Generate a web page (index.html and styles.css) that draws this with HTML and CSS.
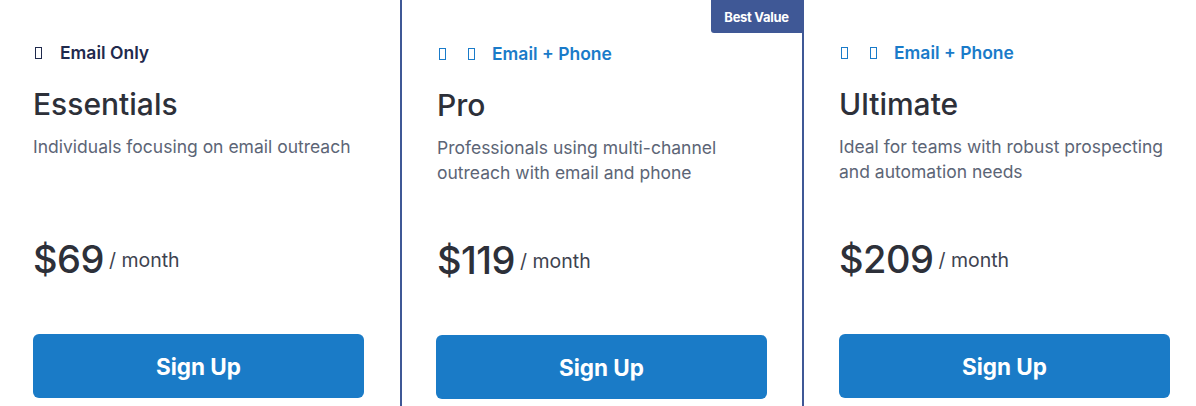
FILE: index.html
```html
<!DOCTYPE html>
<html lang="en">
<head>
<meta charset="utf-8">
<title>Pricing</title>
<link rel="stylesheet" href="styles.css">
</head>
<body>
<div class="plans">
  <div class="plan">
    <div class="channel channel-dark"><span class="ico"></span><span class="channel-text">Email Only</span></div>
    <h2 class="plan-name">Essentials</h2>
    <p class="plan-desc">Individuals focusing on email outreach</p>
    <div class="price"><span class="amount">$69</span><span class="per">/ month</span></div>
    <a class="btn" href="#">Sign Up</a>
  </div>
  <div class="plan plan-featured">
    <div class="badge">Best Value</div>
    <div class="channel"><span class="ico"></span><span class="ico"></span><span class="channel-text">Email + Phone</span></div>
    <h2 class="plan-name">Pro</h2>
    <p class="plan-desc">Professionals using multi-channel outreach with email and phone</p>
    <div class="price"><span class="amount">$119</span><span class="per">/ month</span></div>
    <a class="btn" href="#">Sign Up</a>
  </div>
  <div class="plan plan-last">
    <div class="channel"><span class="ico"></span><span class="ico"></span><span class="channel-text">Email + Phone</span></div>
    <h2 class="plan-name">Ultimate</h2>
    <p class="plan-desc">Ideal for teams with robust prospecting and automation needs</p>
    <div class="price"><span class="amount">$209</span><span class="per">/ month</span></div>
    <a class="btn" href="#">Sign Up</a>
  </div>
</div>
</body>
</html>
```

FILE: styles.css
```css
html, body {
  margin: 0;
  padding: 0;
  background: #ffffff;
  overflow: hidden;
}

body {
  font-family: Inter, "Noto Sans", "Liberation Sans", sans-serif;
  color: #2d3039;
}

.plans {
  display: grid;
  grid-template-columns: repeat(3, 404px);
  margin-left: -4px;
  height: 420px;
}

.plan {
  position: relative;
  border-left: 2px solid transparent;
  border-right: 2px solid transparent;
  padding: 40px 34px 0 35px;
  display: flex;
  flex-direction: column;
}

.plan-featured {
  border-left-color: #3f5896;
  border-right-color: #3f5896;
  padding: 41px 35px 0 34px;
}

.plan-last {
  border-left-width: 0;
  padding-right: 36px;
}

.badge {
  position: absolute;
  top: 0;
  right: 0;
  width: 91px;
  height: 33px;
  background: #3f5896;
  color: #ffffff;
  font-size: 13px;
  font-weight: 700;
  display: flex;
  align-items: center;
  justify-content: center;
  border-bottom-left-radius: 3px;
  letter-spacing: -0.3px;
}

.channel {
  display: flex;
  align-items: center;
  height: 24px;
  color: #1a7bc9;
  font-size: 17.5px;
  font-weight: 600;
}

.channel-dark {
  color: #1f2a4d;
}

.ico {
  display: inline-block;
  width: 5px;
  height: 10px;
  border: 1px solid currentColor;
  margin: 1px 20px 0 2px;
}

.plan-featured .ico:first-child {
  margin-left: 3px;
}

.channel-text {
  margin-left: -3px;
}

.channel-dark .channel-text {
  margin-left: -2px;
}

.plan-name {
  margin: 22px 0 0 0;
  font-size: 30px;
  line-height: 36px;
  font-weight: 500;
  color: #2d3039;
}

.plan-featured .plan-name,
.plan-featured .plan-desc,
.plan-featured .price {
  padding-left: 1px;
}

.plan-desc {
  margin: 12px 0 0 0;
  min-height: 50px;
  font-size: 17.5px;
  line-height: 25px;
  color: #5c6576;
}

.price {
  margin-top: 52px;
  display: flex;
  align-items: center;
  height: 46px;
}

.amount {
  font-size: 38px;
  line-height: 46px;
  font-weight: 500;
  color: #2d3039;
  letter-spacing: -0.5px;
}

.per {
  margin-left: 5px;
  font-size: 19.5px;
  color: #3e4350;
  position: relative;
  top: 1px;
}

.btn {
  margin-top: 52px;
  height: 64px;
  border-radius: 6px;
  background: #1a7bc7;
  color: #ffffff;
  font-size: 22.5px;
  font-weight: 700;
  text-decoration: none;
  display: flex;
  align-items: center;
  justify-content: center;
}
```
